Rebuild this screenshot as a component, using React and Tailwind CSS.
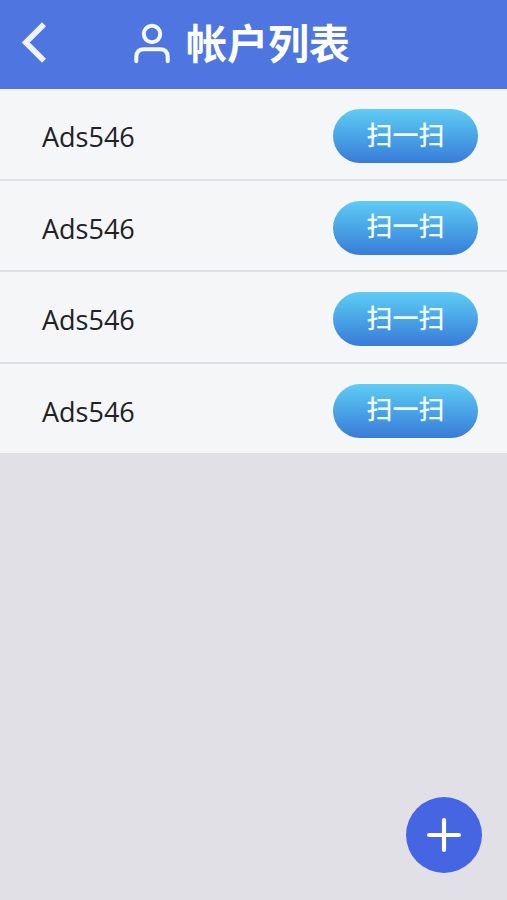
const ACCOUNTS = [
  { id: 1, name: 'Ads546' },
  { id: 2, name: 'Ads546' },
  { id: 3, name: 'Ads546' },
  { id: 4, name: 'Ads546' },
];

function BackIcon() {
  return (
    <svg width="26" height="42" viewBox="0 0 26 42" fill="none" stroke="#eef4ff" strokeWidth="5.6">
      <path d="M23 2.2 L4.7 20.5 L23 38.8" />
    </svg>
  );
}

function UserIcon() {
  return (
    <svg width="36" height="42" viewBox="0 0 36 42" fill="none" stroke="#f4f8ff" strokeWidth="4" strokeLinecap="round">
      <circle cx="18" cy="12" r="8.2" />
      <path d="M2.3 39.3 V35 Q2.3 27.3 10.3 27.3 H25.7 Q33.7 27.3 33.7 35 V39.3" />
    </svg>
  );
}

function AccountRow({ name }) {
  return (
    <li className="flex flex-1 items-center justify-between pl-[42px] pr-[29px] pt-[5px]">
      <span className="pt-px text-[27px] leading-none text-[#202226]">{name}</span>
      <button className="flex h-[54px] w-[145px] items-center justify-center rounded-full bg-linear-to-b from-[#5fcdf3] to-[#397bd8] pb-[3px] text-[26px] font-medium leading-none text-[#effaff]">
        扫一扫
      </button>
    </li>
  );
}

export default function App() {
  return (
    <div className="relative flex h-[900px] w-[507px] flex-col overflow-hidden bg-[#e1e0e7] font-['Open_Sans','Noto_Sans_CJK_SC',sans-serif]">
      <header className="flex h-[89px] items-center bg-[#4f76e0] pb-[3px] pl-[21px]">
        <button aria-label="返回">
          <BackIcon />
        </button>
        <div className="ml-[87px] flex items-center">
          <UserIcon />
          <h1 className="ml-4 pt-px text-[41px] font-bold leading-none text-white">帐户列表</h1>
        </div>
      </header>

      <ul className="flex h-[364px] flex-col divide-y-2 divide-[#dedfe5] bg-[#f4f6f8]">
        {ACCOUNTS.map((account) => (
          <AccountRow key={account.id} name={account.name} />
        ))}
      </ul>

      {/* Add account */}
      <button
        aria-label="添加"
        className="absolute bottom-[27px] right-[25px] flex size-[76px] items-center justify-center rounded-full bg-[#4565e2]"
      >
        <svg width="34" height="34" viewBox="0 0 34 34" stroke="#ffffff" strokeWidth="4.2" strokeLinecap="round">
          <path d="M17 2.1 V31.9 M2.1 17 H31.9" />
        </svg>
      </button>
    </div>
  );
}
